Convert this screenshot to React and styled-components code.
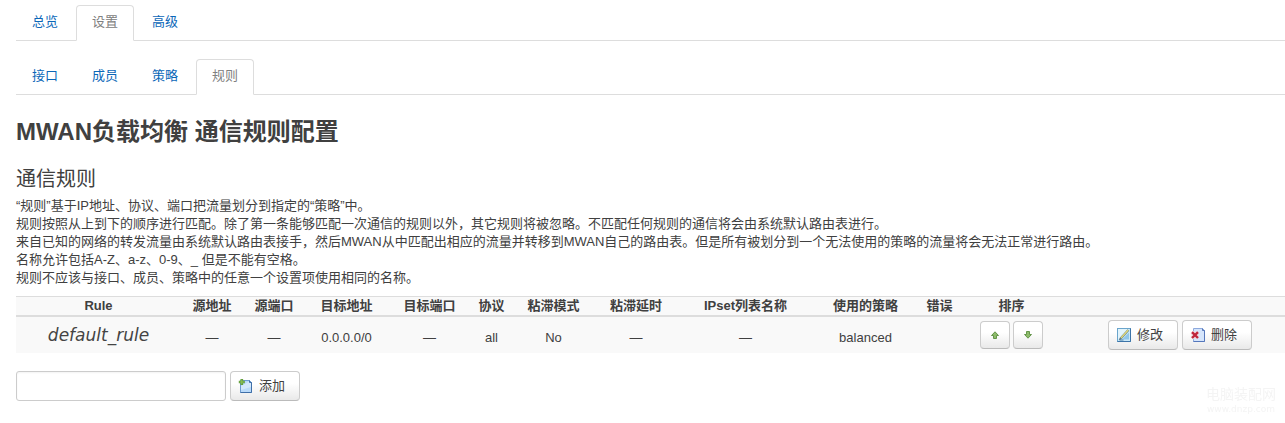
import styled, { createGlobalStyle } from "styled-components";

const MAIN_TABS = ["总览", "设置", "高级"];
const SUB_TABS = ["接口", "成员", "策略", "规则"];

const COLUMNS = [
  { label: "Rule", width: 165 },
  { label: "源地址", width: 62 },
  { label: "源端口", width: 62 },
  { label: "目标地址", width: 83 },
  { label: "目标端口", width: 83 },
  { label: "协议", width: 41 },
  { label: "粘滞模式", width: 83 },
  { label: "粘滞延时", width: 82 },
  { label: "IPset列表名称", width: 137 },
  { label: "使用的策略", width: 103 },
  { label: "错误", width: 45 },
  { label: "排序", width: 99 },
  { label: "" },
];

const RULES = [
  {
    name: "default_rule",
    values: ["—", "—", "0.0.0.0/0", "—", "all", "No", "—", "—", "balanced", ""],
  },
];

const TabBar = ({ items, active }) => (
  <Tabs>
    {items.map((item) => (
      <li key={item}>
        <Tab href="#" $active={item === active}>
          {item}
        </Tab>
      </li>
    ))}
  </Tabs>
);

const ArrowIcon = ({ down }) => (
  <svg width="10" height="10" viewBox="0 0 10 10" aria-hidden="true">
    <path
      d={down ? "M3.5 1.5h3v3h2L5 8.2 1.5 4.5h2z" : "M5 1.8l3.5 3.7h-2v3h-3v-3h-2z"}
      fill="#8dbb6a"
      stroke="#65964a"
      strokeLinejoin="round"
    />
  </svg>
);

const EditIcon = () => (
  <svg width="16" height="16" viewBox="0 0 16 16" aria-hidden="true">
    <rect x="1.5" y="1.5" width="13" height="13" fill="#c9e8f8" stroke="#6aa5cc" />
    <path d="M2 2h11L4 12H2z" fill="#e2f4fc" />
    <path d="M6 12.5h7V5.5z" fill="#8fc6ea" />
    <path d="M14.5 1.5v13h-13" fill="none" stroke="#3d74a8" />
    <path d="M4.6 11.6L12.4 3" stroke="#5c7f8c" strokeWidth="2.2" />
    <path d="M5 11L12.2 3" stroke="#e9dc74" strokeWidth="1.2" />
    <path d="M3.2 13l.6-2.2 1.6 1.5z" fill="#37474c" />
    <path d="M3.5 13h4" stroke="#4c7fa8" />
  </svg>
);

const DeleteIcon = () => (
  <svg width="16" height="16" viewBox="0 0 16 16" aria-hidden="true">
    <path d="M3.5 1.5h9l2 2v11h-11z" fill="#d5e5fc" stroke="#8da9dc" />
    <path d="M12.5 1.5v2h2v11h-11" fill="none" stroke="#5577bb" />
    <path d="M2 5.2l6 5.8M8 5.2L2 11" stroke="#f3dbe1" strokeWidth="4" />
    <path d="M2 5.2l6 5.8M8 5.2L2 11" stroke="#c0263c" strokeWidth="2.4" />
  </svg>
);

const AddIcon = () => (
  <svg width="16" height="16" viewBox="0 0 16 16" aria-hidden="true">
    <path d="M2.5 2.5h9l2 2v10h-11z" fill="#b9dafa" stroke="#6c9bd0" />
    <path d="M3 8l8-4.5 2 1.5v4L3 12z" fill="#d3e8fd" />
    <path d="M11.5 2.5v2h2v10h-11" fill="none" stroke="#3f6fa8" />
    <path d="M3.8 1v6M.8 4h6" stroke="#5f9a3a" strokeWidth="2.6" />
    <path d="M3.8 1.7v4.6M1.5 4h4.6" stroke="#8cc25c" strokeWidth="1" />
  </svg>
);

const App = () => {
  return (
    <>
      <GlobalStyle />
      <Page>
        <nav>
          <TabBar items={MAIN_TABS} active="设置" />
          <TabBar items={SUB_TABS} active="规则" />
        </nav>
        <Title>MWAN负载均衡 通信规则配置</Title>
        <Subtitle>通信规则</Subtitle>
        <Description>
          “规则”基于IP地址、协议、端口把流量划分到指定的“策略”中。
          <br />
          规则按照从上到下的顺序进行匹配。除了第一条能够匹配一次通信的规则以外，其它规则将被忽略。不匹配任何规则的通信将会由系统默认路由表进行。
          <br />
          来自已知的网络的转发流量由系统默认路由表接手，然后MWAN从中匹配出相应的流量并转移到MWAN自己的路由表。但是所有被划分到一个无法使用的策略的流量将会无法正常进行路由。
          <br />
          名称允许包括A-Z、a-z、0-9、_ 但是不能有空格。
          <br />
          规则不应该与接口、成员、策略中的任意一个设置项使用相同的名称。
        </Description>
        <Table>
          <colgroup>
            {COLUMNS.map((column) => (
              <col key={column.label} width={column.width} />
            ))}
          </colgroup>
          <thead>
            <tr>
              {COLUMNS.map((column) => (
                <HeadCell key={column.label}>{column.label}</HeadCell>
              ))}
            </tr>
          </thead>
          <tbody>
            {RULES.map((rule) => (
              <tr key={rule.name}>
                <NameCell>{rule.name}</NameCell>
                {rule.values.map((value, index) => (
                  <Cell key={index}>{value}</Cell>
                ))}
                <ActionCell>
                  <Actions $gap={3}>
                    <SortButton type="button" aria-label="上移">
                      <ArrowIcon />
                    </SortButton>
                    <SortButton type="button" aria-label="下移">
                      <ArrowIcon down />
                    </SortButton>
                  </Actions>
                </ActionCell>
                <ActionCell>
                  <Actions $gap={4}>
                    <Button type="button">
                      <EditIcon />
                      修改
                    </Button>
                    <Button type="button">
                      <DeleteIcon />
                      删除
                    </Button>
                  </Actions>
                </ActionCell>
              </tr>
            ))}
          </tbody>
        </Table>
        <AddForm onSubmit={(e) => e.preventDefault()}>
          <NameInput type="text" aria-label="名称" />
          <Button type="submit">
            <AddIcon />
            添加
          </Button>
        </AddForm>
      </Page>
      <Watermark>
        <SiteName>电脑装配网</SiteName>
        <SiteUrl>www.dnzp.com</SiteUrl>
      </Watermark>
    </>
  );
};

export default App;

const GlobalStyle = createGlobalStyle`
  * {
    box-sizing: border-box;
  }

  body {
    margin: 0;
    background: #fff;
    color: #404040;
    font-family: "Liberation Sans", "Noto Sans CJK SC", sans-serif;
    font-size: 13px;
    line-height: 18px;
  }

  button,
  input {
    font: inherit;
    color: inherit;
  }
`;

const Page = styled.main`
  padding: 5px 0 20px 16px;
`;

const Tabs = styled.ul`
  display: flex;
  gap: 2px;
  height: 36px;
  margin: 0 0 18px;
  padding: 0;
  list-style: none;
  border-bottom: 1px solid #ddd;
`;

const Tab = styled.a`
  display: block;
  height: 36px;
  padding: 0 15px;
  line-height: 32px;
  text-decoration: none;
  color: ${({ $active }) => ($active ? "#808080" : "#0b67b8")};
  background: ${({ $active }) => ($active ? "#fff" : "none")};
  border: 1px solid transparent;
  border-color: ${({ $active }) => $active && "#ddd #ddd #fff"};
  border-radius: 4px 4px 0 0;
  background-clip: padding-box;
`;

const Title = styled.h2`
  margin: 0;
  font-size: 24px;
  line-height: 38px;
`;

const Subtitle = styled.h3`
  margin: 10px 0 0;
  font-size: 20px;
  font-weight: normal;
  line-height: 36px;
`;

const Description = styled.p`
  margin: 0 0 9px;
`;

const Table = styled.table`
  width: 100%;
  table-layout: fixed;
  border-collapse: separate;
  border-spacing: 0;
  text-align: center;
`;

const HeadCell = styled.th`
  height: 21px;
  padding: 0;
  white-space: nowrap;
  background: #f9f9f9;
  border-top: 1px solid #ddd;
  border-bottom: 2px solid #ddd;
`;

const Cell = styled.td`
  height: 36px;
  padding: 6px 0 0;
  background: #f9f9f9;
`;

const NameCell = styled(Cell)`
  padding: 0;
  color: #444;
  font-family: "DejaVu Sans", sans-serif;
  font-size: 17px;
  font-style: italic;
`;

const ActionCell = styled(Cell)`
  padding: 0;

  &:last-child {
    padding-left: 14px;
  }
`;

const Actions = styled.div`
  display: flex;
  align-items: center;
  justify-content: center;
  gap: ${({ $gap }) => $gap}px;
`;

const Button = styled.button`
  display: flex;
  align-items: center;
  gap: 5px;
  height: 30px;
  padding: 0 14px 0 7px;
  white-space: nowrap;
  background: linear-gradient(#fff 40%, #e9e9e9);
  border: 1px solid #ccc;
  border-bottom-color: #bbb;
  border-radius: 4px;
  cursor: pointer;
`;

const SortButton = styled(Button)`
  justify-content: center;
  width: 30px;
  height: 28px;
  padding: 0;
`;

const AddForm = styled.form`
  display: flex;
  align-items: center;
  gap: 4px;
  margin-top: 18px;
`;

const NameInput = styled.input`
  width: 210px;
  height: 30px;
  padding: 4px;
  background: #fff;
  border: 1px solid #ccc;
  border-radius: 3px;
  box-shadow: inset 0 1px 2px rgba(0, 0, 0, 0.05);
`;

const Watermark = styled.div`
  position: fixed;
  right: 9px;
  bottom: 8px;
  color: #f4f4f4;
  text-align: center;
`;

const SiteName = styled.div`
  font-size: 14px;
`;

const SiteUrl = styled.div`
  font-family: "DejaVu Sans", sans-serif;
  font-size: 9px;
  line-height: 12px;
`;
